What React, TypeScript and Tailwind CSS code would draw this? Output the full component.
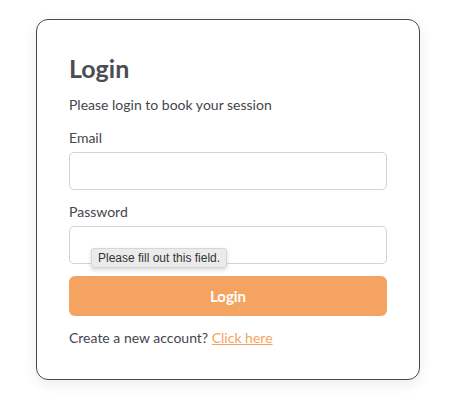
import React from 'react';

export default function App() {
  return (
    <div className="min-h-screen bg-white pt-[19px] pl-[36px]" style={{ fontFamily: 'Lato, "Noto Sans", sans-serif' }}>
      <div className="relative w-[384px] rounded-xl border border-[#4a4a4a] bg-white px-8 pt-8 pb-[31px] shadow-[0_4px_14px_rgba(0,0,0,0.08)] text-[#45454d]">
        <h1 className="text-[25px] leading-8 font-bold text-[#4d4d55]">Login</h1>
        <p className="mt-[11px] text-[14px] leading-5">Please login to book your session</p>

        <label className="mt-[13px] block text-[14px] leading-5">Email</label>
        <input type="email" className="mt-1 block h-[38px] w-full rounded-[5px] border border-[#d4d4d4] bg-white px-3 outline-none" />

        <label className="mt-3 block text-[14px] leading-5">Password</label>
        <div className="relative">
          <input type="password" className="mt-1 block h-[38px] w-full rounded-[5px] border border-[#d4d4d4] bg-white px-3 outline-none" />
          <div className="absolute left-[22px] top-[22px] rounded-[3px] border border-[#d6d6d6] bg-[#ebebeb] px-[6px] py-[2px] text-[12px] leading-[14px] text-[#333] shadow-[0_2px_4px_rgba(0,0,0,0.15)]" style={{ fontFamily: '"Liberation Sans", Arial, sans-serif' }}>
            Please fill out this field.
          </div>
        </div>

        <button className="mt-3 block h-10 w-full rounded-md bg-[#f4a460] text-[15px] font-bold text-white">Login</button>

        <p className="mt-3 text-[14px] leading-5">
          Create a new account?{' '}
          <a href="#" className="text-[#f4a460] underline">Click here</a>
        </p>
      </div>
    </div>
  );
}
